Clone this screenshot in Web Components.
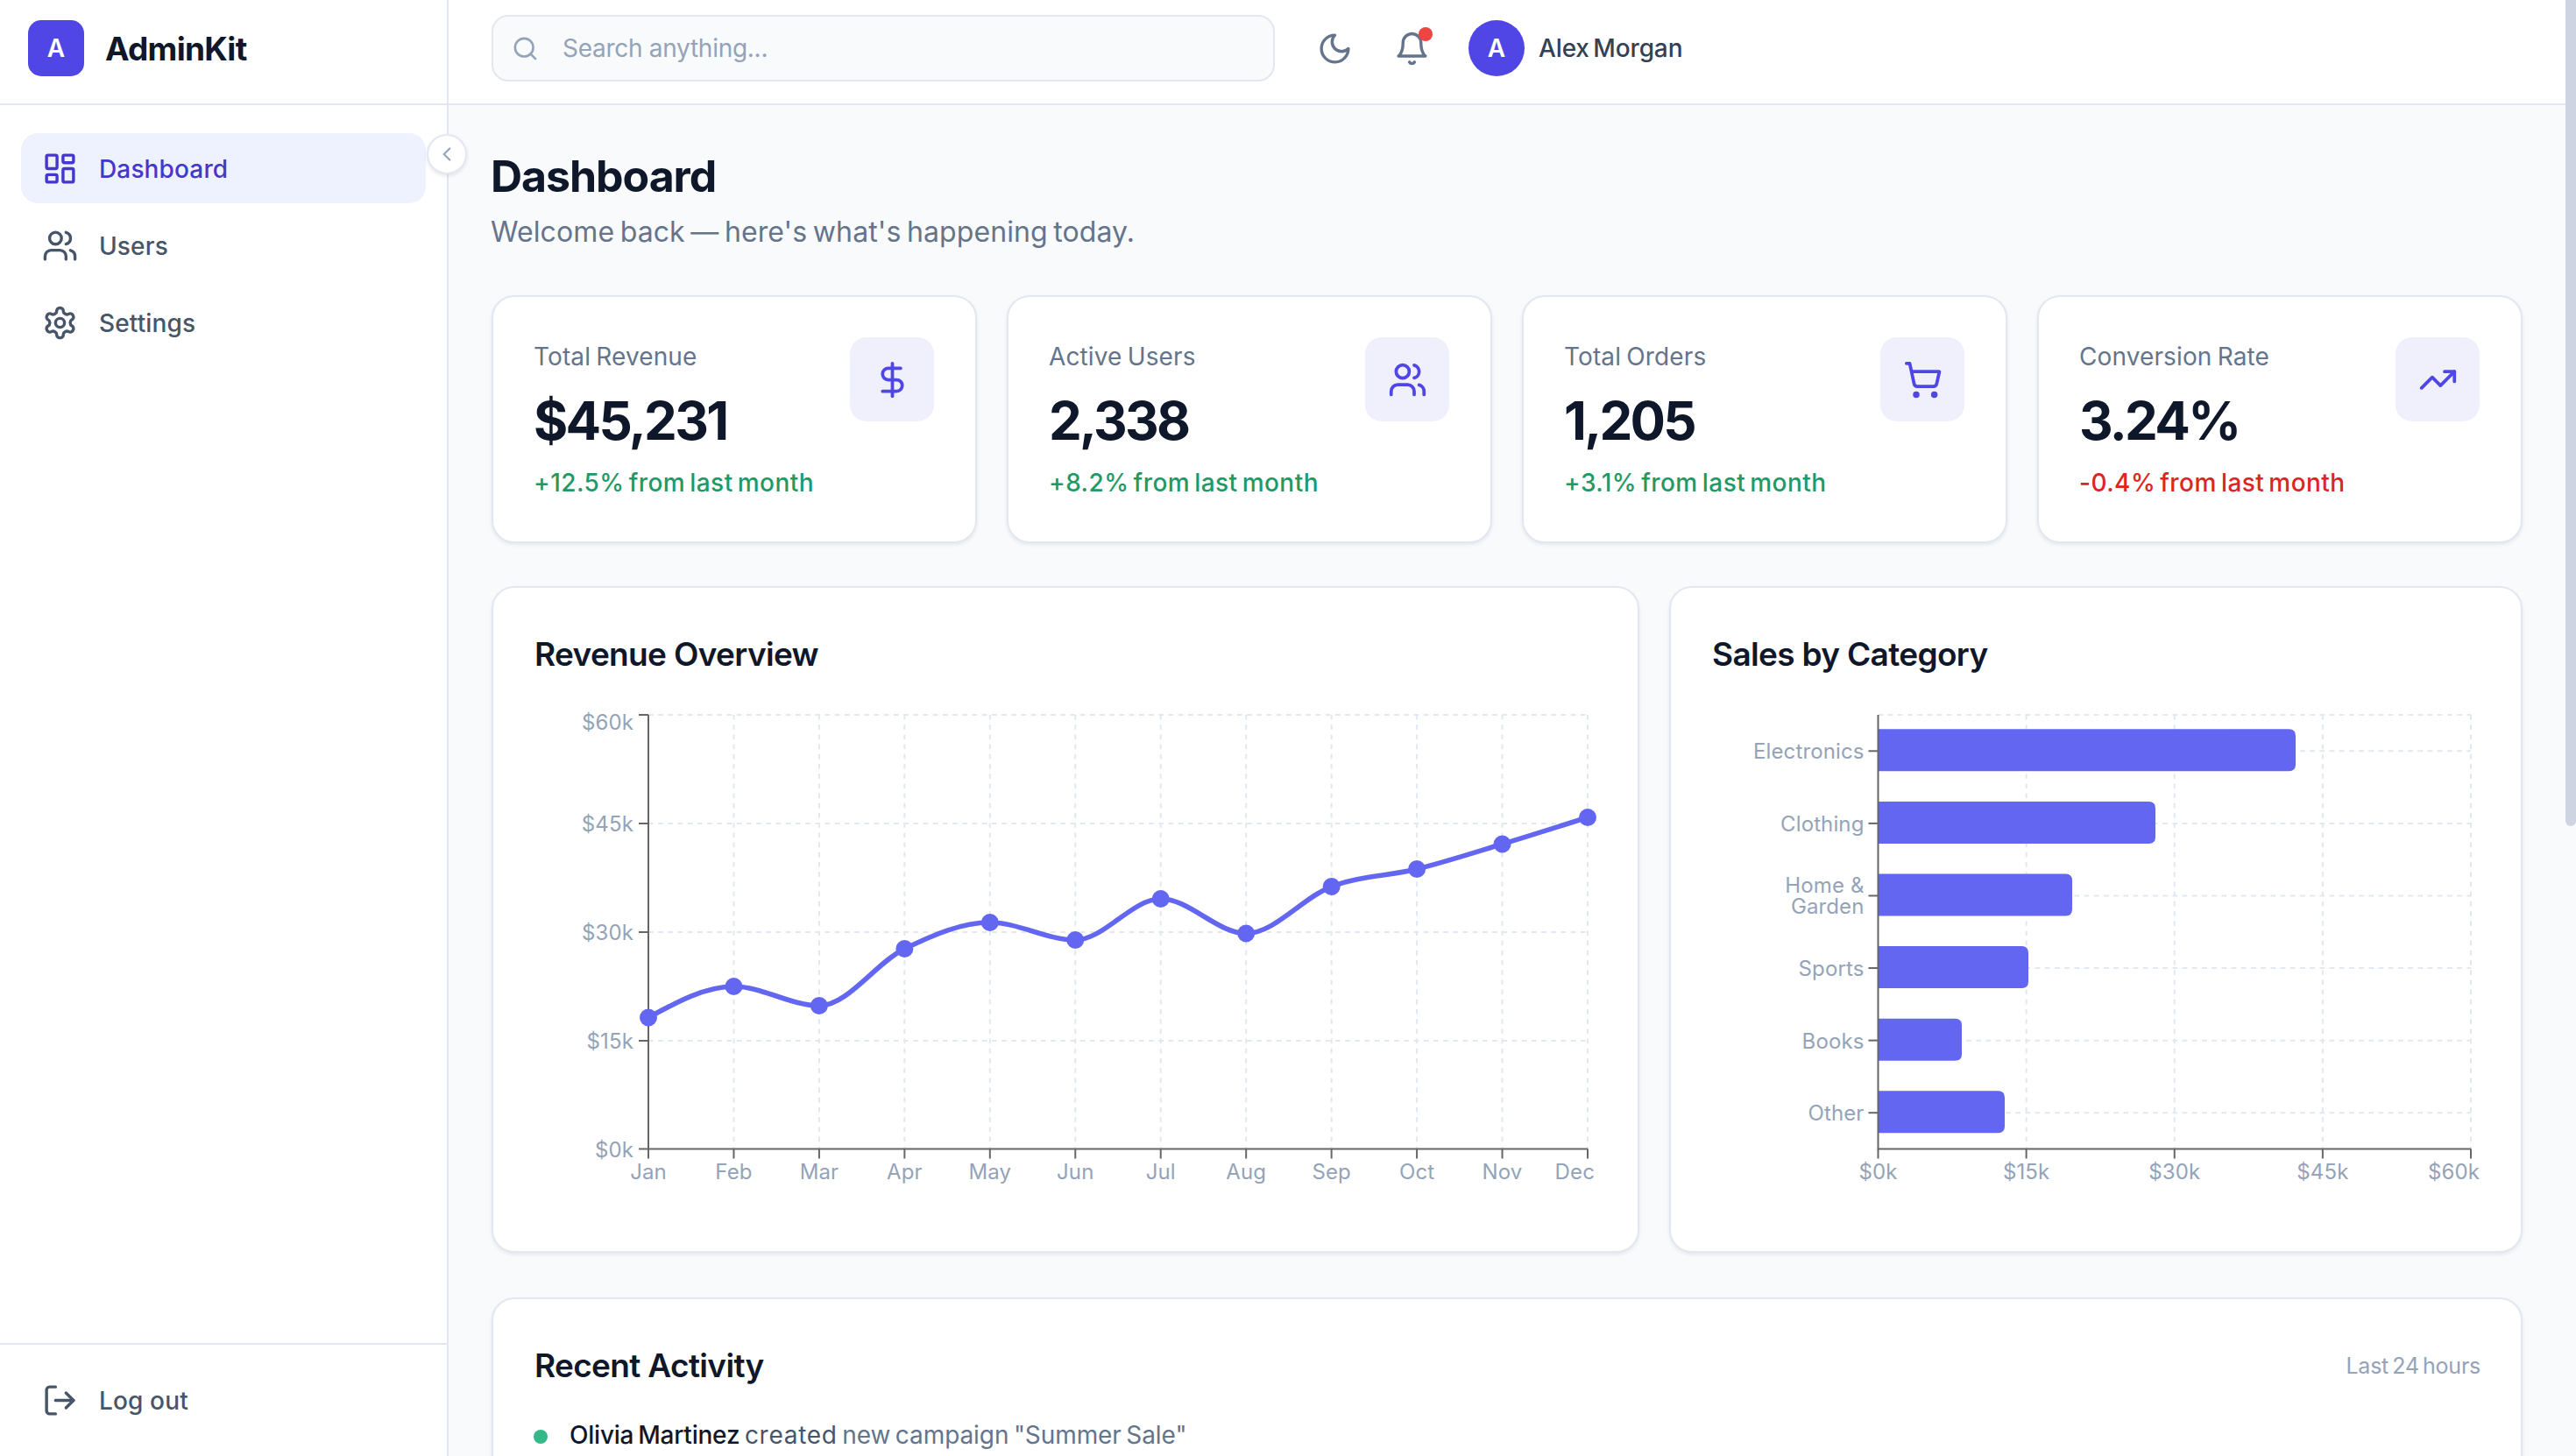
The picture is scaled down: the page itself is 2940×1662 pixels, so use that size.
<!DOCTYPE html>
<html lang="en">
<head>
<meta charset="utf-8">
<title>AdminKit</title>
<style>
  html, body { margin: 0; height: 100%; overflow: hidden; background: #f8fafc; }
  body { font-family: Inter, "Liberation Sans", sans-serif; color: #0f172a; }
</style>
</head>
<body>
<app-shell>
  <side-bar slot="side">
    <nav-item icon="dashboard" active>Dashboard</nav-item>
    <nav-item icon="users">Users</nav-item>
    <nav-item icon="settings">Settings</nav-item>
    <nav-item slot="footer" icon="logout">Log out</nav-item>
  </side-bar>
  <top-bar slot="top"></top-bar>
  <page-head>
    <span slot="title">Dashboard</span>
    <span slot="sub">Welcome back — here's what's happening today.</span>
  </page-head>
  <stat-row>
    <stat-card label="Total Revenue" value="$45,231" change="+12.5% from last month" icon="dollar"></stat-card>
    <stat-card label="Active Users" value="2,338" change="+8.2% from last month" icon="users"></stat-card>
    <stat-card label="Total Orders" value="1,205" change="+3.1% from last month" icon="cart"></stat-card>
    <stat-card label="Conversion Rate" value="3.24%" change="-0.4% from last month" icon="trend" down></stat-card>
  </stat-row>
  <chart-row>
    <chart-card heading="Revenue Overview"><line-chart></line-chart></chart-card>
    <chart-card heading="Sales by Category"><bar-chart></bar-chart></chart-card>
  </chart-row>
  <activity-card heading="Recent Activity" note="Last 24 hours">
    <activity-item who="Olivia Martinez" verb="created">new campaign "Summer Sale"</activity-item>
  </activity-card>
</app-shell>
<page-thumb></page-thumb>

<script>
(function () {

  // lucide shapes, by name
  const ICONS = {
    dashboard: '<rect width="7" height="9" x="3" y="3" rx="1"/><rect width="7" height="5" x="14" y="3" rx="1"/><rect width="7" height="9" x="14" y="12" rx="1"/><rect width="7" height="5" x="3" y="16" rx="1"/>',
    users: '<path d="M16 21v-2a4 4 0 0 0-4-4H6a4 4 0 0 0-4 4v2"/><circle cx="9" cy="7" r="4"/><path d="M22 21v-2a4 4 0 0 0-3-3.87"/><path d="M16 3.13a4 4 0 0 1 0 7.75"/>',
    settings: '<path d="M12.22 2h-.44a2 2 0 0 0-2 2v.18a2 2 0 0 1-1 1.73l-.43.25a2 2 0 0 1-2 0l-.15-.08a2 2 0 0 0-2.73.73l-.22.38a2 2 0 0 0 .73 2.73l.15.1a2 2 0 0 1 1 1.72v.51a2 2 0 0 1-1 1.74l-.15.09a2 2 0 0 0-.73 2.73l.22.38a2 2 0 0 0 2.73.73l.15-.08a2 2 0 0 1 2 0l.43.25a2 2 0 0 1 1 1.73V20a2 2 0 0 0 2 2h.44a2 2 0 0 0 2-2v-.18a2 2 0 0 1 1-1.73l.43-.25a2 2 0 0 1 2 0l.15.08a2 2 0 0 0 2.73-.73l.22-.39a2 2 0 0 0-.73-2.73l-.15-.08a2 2 0 0 1-1-1.74v-.5a2 2 0 0 1 1-1.74l.15-.09a2 2 0 0 0 .73-2.73l-.22-.38a2 2 0 0 0-2.73-.73l-.15.08a2 2 0 0 1-2 0l-.43-.25a2 2 0 0 1-1-1.73V4a2 2 0 0 0-2-2z"/><circle cx="12" cy="12" r="3"/>',
    logout: '<path d="M9 21H5a2 2 0 0 1-2-2V5a2 2 0 0 1 2-2h4"/><polyline points="16 17 21 12 16 7"/><line x1="21" x2="9" y1="12" y2="12"/>',
    search: '<circle cx="11" cy="11" r="8"/><path d="m21 21-4.3-4.3"/>',
    moon: '<path d="M12 3a6 6 0 0 0 9 9 9 9 0 1 1-9-9Z"/>',
    bell: '<path d="M6 8a6 6 0 0 1 12 0c0 7 3 9 3 9H3s3-2 3-9"/><path d="M10.3 21a1.94 1.94 0 0 0 3.4 0"/>',
    dollar: '<line x1="12" x2="12" y1="2" y2="22"/><path d="M17 5H9.5a3.5 3.5 0 0 0 0 7h5a3.5 3.5 0 0 1 0 7H6"/>',
    cart: '<circle cx="8" cy="21" r="1"/><circle cx="19" cy="21" r="1"/><path d="M2.05 2.05h2l2.66 12.42a2 2 0 0 0 2 1.58h9.78a2 2 0 0 0 1.95-1.57l1.65-7.43H5.12"/>',
    trend: '<polyline points="22 7 13.5 15.5 8.5 10.5 2 17"/><polyline points="16 7 22 7 22 13"/>',
    chevron: '<path d="m15 18-6-6 6-6"/>'
  };

  const LINE = '#e3e7f1';

  function makeElement(name, css, html) {
    const template = document.createElement('template');
    template.innerHTML = '<style>' + css + '</style>' + html;
    return template;
  }

  class UiIcon extends HTMLElement {
    static get observedAttributes() {
      return ['name'];
    }
    constructor() {
      super();
      this.attachShadow({ mode: 'open' });
    }
    attributeChangedCallback() {
      const size = this.getAttribute('size') || 41;
      this.shadowRoot.innerHTML = '<style>:host{display:block;flex:none;line-height:0}</style>' +
        '<svg xmlns="http://www.w3.org/2000/svg" width="' + size + '" height="' + size + '" viewBox="0 0 24 24" fill="none" stroke="currentColor" stroke-width="2" stroke-linecap="round" stroke-linejoin="round">' +
        (ICONS[this.getAttribute('name')] || '') + '</svg>';
    }
  }
  customElements.define('ui-icon', UiIcon);

  const shellTemplate = makeElement('app-shell',
    ':host{display:grid;grid-template-columns:512px 1fr;height:1662px;overflow:hidden;padding-right:12px;box-sizing:border-box}' +
    '.col{display:flex;flex-direction:column;min-width:0;height:1662px;overflow:hidden}' +
    '.main{display:flex;flex-direction:column;padding:47px 49px 0}',
    '<slot name="side"></slot><div class="col"><slot name="top"></slot><div class="main"><slot></slot></div></div>');

  class AppShell extends HTMLElement {
    constructor() {
      super();
      this.attachShadow({ mode: 'open' }).appendChild(shellTemplate.content.cloneNode(true));
    }
  }
  customElements.define('app-shell', AppShell);

  const sideTemplate = makeElement('side-bar',
    ':host{display:flex;flex-direction:column;height:1662px;background:#fff;border-right:2px solid ' + LINE + ';box-sizing:border-box;position:relative}' +
    '.brand{display:flex;align-items:center;gap:24px;height:120px;box-sizing:border-box;padding:0 32px 8px;border-bottom:2px solid ' + LINE + '}' +
    '.logo{width:64px;height:64px;border-radius:15px;background:#4f46e5;color:#fff;display:flex;align-items:center;justify-content:center;font-size:28px;font-weight:600}' +
    '.name{font-size:37px;font-weight:700;color:#0f172a;letter-spacing:-.02em}' +
    'nav{display:flex;flex-direction:column;gap:8px;padding:32px 24px;flex:1}' +
    '.foot{height:129px;box-sizing:border-box;border-top:2px solid ' + LINE + ';padding:23px 24px 0}' +
    '.toggle{position:absolute;left:487px;top:153px;width:46px;height:46px;box-sizing:border-box;border-radius:50%;background:#fff;border:2px solid ' + LINE + ';box-shadow:0 2px 4px rgba(15,23,42,.1);display:flex;align-items:center;justify-content:center;color:#94a3b8;z-index:2}',
    '<div class="brand"><div class="logo">A</div><div class="name">AdminKit</div></div>' +
    '<nav><slot></slot></nav><div class="foot"><slot name="footer"></slot></div>' +
    '<div class="toggle"><ui-icon name="chevron" size="26"></ui-icon></div>');

  class SideBar extends HTMLElement {
    constructor() {
      super();
      this.attachShadow({ mode: 'open' }).appendChild(sideTemplate.content.cloneNode(true));
    }
  }
  customElements.define('side-bar', SideBar);

  const navTemplate = makeElement('nav-item',
    ':host{display:flex;align-items:center;gap:24px;height:80px;padding:0 24px;border-radius:19px;font-size:28px;font-weight:500;color:#475569;letter-spacing:.005em}' +
    ':host([active]){background:#eef2ff;color:#4338ca}' +
    'span{margin-top:2px}',
    '<ui-icon></ui-icon><span><slot></slot></span>');

  class NavItem extends HTMLElement {
    constructor() {
      super();
      this.attachShadow({ mode: 'open' }).appendChild(navTemplate.content.cloneNode(true));
    }
    connectedCallback() {
      this.shadowRoot.querySelector('ui-icon').setAttribute('name', this.getAttribute('icon'));
    }
  }
  customElements.define('nav-item', NavItem);

  const topTemplate = makeElement('top-bar',
    ':host{display:flex;align-items:center;height:120px;box-sizing:border-box;padding:0 0 8px 49px;background:#fff;border-bottom:2px solid ' + LINE + ';flex:none}' +
    '.search{display:flex;align-items:center;gap:27px;width:894px;height:76px;box-sizing:border-box;padding:0 21px;background:#f8fafc;border:2px solid ' + LINE + ';border-radius:19px;color:#94a3b8;font-size:28px;letter-spacing:-.01em}' +
    '.btn{position:relative;width:75px;height:75px;display:flex;align-items:center;justify-content:center;color:#64748b}' +
    '.moon{margin-left:31px}.bell{margin-left:13px}' +
    '.dot{position:absolute;left:45px;top:13px;width:16px;height:16px;border-radius:50%;background:#ef4444}' +
    '.avatar{margin-left:27px;width:64px;height:64px;border-radius:50%;background:#4f46e5;color:#fff;display:flex;align-items:center;justify-content:center;font-size:28px;font-weight:600}' +
    '.who{margin-left:16px;font-size:28px;font-weight:500;color:#334155;letter-spacing:-.005em;word-spacing:-.1em}',
    '<div class="search"><ui-icon name="search" size="31"></ui-icon><span>Search anything...</span></div>' +
    '<div class="btn moon"><ui-icon name="moon"></ui-icon></div>' +
    '<div class="btn bell"><ui-icon name="bell"></ui-icon><span class="dot"></span></div>' +
    '<div class="avatar">A</div><div class="who">Alex Morgan</div>');

  class TopBar extends HTMLElement {
    constructor() {
      super();
      this.attachShadow({ mode: 'open' }).appendChild(topTemplate.content.cloneNode(true));
    }
  }
  customElements.define('top-bar', TopBar);

  const headTemplate = makeElement('page-head',
    ':host{display:block;margin-bottom:50px}' +
    '.t{font-size:50px;line-height:68px;font-weight:700;color:#0f172a;letter-spacing:-.021em;margin-bottom:8px;margin-left:-1px}' +
    '.s{font-size:32px;line-height:44px;color:#64748b;letter-spacing:.003em;word-spacing:-.08em;margin-left:-1px}',
    '<div class="t"><slot name="title"></slot></div><div class="s"><slot name="sub"></slot></div>');

  class PageHead extends HTMLElement {
    constructor() {
      super();
      this.attachShadow({ mode: 'open' }).appendChild(headTemplate.content.cloneNode(true));
    }
  }
  customElements.define('page-head', PageHead);

  class StatRow extends HTMLElement {
    constructor() {
      super();
      this.attachShadow({ mode: 'open' }).innerHTML =
        '<style>:host{display:grid;grid-template-columns:repeat(4,1fr);gap:34px;margin-bottom:49px}</style><slot></slot>';
    }
  }
  customElements.define('stat-row', StatRow);

  const CARD_CSS = 'background:#fff;border:2px solid ' + LINE + ';border-radius:26px;box-shadow:0 2px 4px rgba(15,23,42,.08);box-sizing:border-box;padding:46px;';

  const statTemplate = makeElement('stat-card',
    ':host{display:flex;justify-content:space-between;height:283px;' + CARD_CSS + 'padding-right:47px}' +
    '.label{font-size:28px;line-height:44px;color:#64748b;letter-spacing:.004em;word-spacing:-.06em}' +
    '.value{font-size:60px;line-height:72px;font-weight:700;color:#0f172a;letter-spacing:-.045em;margin-top:15px}' +
    '.change{font-size:28px;line-height:44px;font-weight:500;color:#1f9a66;letter-spacing:.016em;word-spacing:-.1em;margin-top:13px}' +
    ':host([down]) .change{color:#dc2626}' +
    '.tile{width:96px;height:96px;border-radius:19px;background:#f0f0fd;color:#4f46e5;display:flex;align-items:center;justify-content:center}',
    '<div><div class="label"></div><div class="value"></div><div class="change"></div></div><div class="tile"><ui-icon size="45"></ui-icon></div>');

  class StatCard extends HTMLElement {
    constructor() {
      super();
      this.attachShadow({ mode: 'open' }).appendChild(statTemplate.content.cloneNode(true));
    }
    connectedCallback() {
      const root = this.shadowRoot;
      root.querySelector('.label').textContent = this.getAttribute('label');
      root.querySelector('.value').textContent = this.getAttribute('value');
      root.querySelector('.change').textContent = this.getAttribute('change');
      root.querySelector('ui-icon').setAttribute('name', this.getAttribute('icon'));
    }
  }
  customElements.define('stat-card', StatCard);

  class ChartRow extends HTMLElement {
    constructor() {
      super();
      this.attachShadow({ mode: 'open' }).innerHTML =
        '<style>:host{display:grid;grid-template-columns:1310fr 974fr;gap:34px;margin-bottom:51px}</style><slot></slot>';
    }
  }
  customElements.define('chart-row', ChartRow);

  const chartCardTemplate = makeElement('chart-card',
    ':host{display:block;height:761px;' + CARD_CSS + '}' +
    'h2{margin:2px 0 26px 1px;font-size:37px;line-height:55px;font-weight:600;color:#0f172a;letter-spacing:-.018em}',
    '<h2></h2><slot></slot>');

  class ChartCard extends HTMLElement {
    constructor() {
      super();
      this.attachShadow({ mode: 'open' }).appendChild(chartCardTemplate.content.cloneNode(true));
    }
    connectedCallback() {
      this.shadowRoot.querySelector('h2').textContent = this.getAttribute('heading');
    }
  }
  customElements.define('chart-card', ChartCard);

  const CHART_CSS = ':host{display:block}svg{display:block;overflow:visible}' +
    'text{font-family:Inter,"Liberation Sans",sans-serif;font-size:24px;fill:#94a3b8;letter-spacing:.005em}' +
    '.grid{stroke:#e2e8f0;stroke-width:2;stroke-dasharray:5.6 5.6;fill:none}' +
    '.axis{stroke:#666;stroke-width:2;fill:none}';

  // same curve as a monotone-x line
  function monotonePath(pts) {
    const n = pts.length;
    const slopes = [];
    for (let i = 0; i < n - 1; i++) slopes.push((pts[i + 1][1] - pts[i][1]) / (pts[i + 1][0] - pts[i][0]));
    const t = new Array(n);
    for (let i = 1; i < n - 1; i++) {
      const h0 = pts[i][0] - pts[i - 1][0], h1 = pts[i + 1][0] - pts[i][0];
      const s0 = slopes[i - 1], s1 = slopes[i];
      const p = (s0 * h1 + s1 * h0) / (h0 + h1);
      t[i] = (Math.sign(s0) + Math.sign(s1)) * Math.min(Math.abs(s0), Math.abs(s1), 0.5 * Math.abs(p)) || 0;
    }
    t[0] = (3 * slopes[0] - t[1]) / 2;
    t[n - 1] = (3 * slopes[n - 2] - t[n - 2]) / 2;
    let d = 'M' + pts[0][0] + ',' + pts[0][1];
    for (let i = 0; i < n - 1; i++) {
      const dx = (pts[i + 1][0] - pts[i][0]) / 3;
      d += 'C' + (pts[i][0] + dx) + ',' + (pts[i][1] + dx * t[i]) + ',' +
        (pts[i + 1][0] - dx) + ',' + (pts[i + 1][1] - dx * t[i + 1]) + ',' + pts[i + 1][0] + ',' + pts[i + 1][1];
    }
    return d;
  }

  class LineChart extends HTMLElement {
    connectedCallback() {
      if (this.shadowRoot) return;
      const months = ['Jan', 'Feb', 'Mar', 'Apr', 'May', 'Jun', 'Jul', 'Aug', 'Sep', 'Oct', 'Nov', 'Dec'];
      const ys = [1161.5, 1126, 1148, 1083, 1053, 1073, 1026, 1065.5, 1012, 992, 963.5, 933];
      const left = 740, right = 1812, top = 816, bottom = 1311.5;
      const step = (right - left) / 11;
      const rows = [[816, '$60k', 824], [940, '$45k', 940], [1064, '$30k', 1064], [1188, '$15k', 1188], [1311.5, '$0k', 1312]];
      const pts = ys.map((y, i) => [left + i * step, y]);
      let s = '';
      rows.forEach(r => { if (r[0] !== bottom) s += `<line class="grid" x1="${left}" x2="${right}" y1="${r[0]}" y2="${r[0]}"/>`; });
      pts.forEach((p, i) => { if (i) s += `<line class="grid" x1="${p[0]}" x2="${p[0]}" y1="${top}" y2="${bottom}"/>`; });
      s += `<path class="axis" d="M${left} ${top}V${bottom}H${right}"/>`;
      rows.forEach(r => {
        s += `<line class="axis" x1="${left - 11}" x2="${left}" y1="${r[0]}" y2="${r[0]}"/>`;
        s += `<text x="723" y="${r[2] + 9}" text-anchor="end">${r[1]}</text>`;
      });
      pts.forEach((p, i) => {
        s += `<line class="axis" x1="${p[0]}" x2="${p[0]}" y1="${bottom}" y2="${bottom + 11}"/>`;
        s += i === 11
          ? `<text x="1820" y="1346" text-anchor="end">${months[i]}</text>`
          : `<text x="${p[0]}" y="1346" text-anchor="middle">${months[i]}</text>`;
      });
      s += `<path d="${monotonePath(pts)}" fill="none" stroke="#6366f1" stroke-width="5.6"/>`;
      pts.forEach(p => { s += `<circle cx="${p[0]}" cy="${p[1]}" r="10" fill="#6366f1"/>`; });
      this.attachShadow({ mode: 'open' }).innerHTML = '<style>' + CHART_CSS + '</style>' +
        `<svg xmlns="http://www.w3.org/2000/svg" width="1214" height="580" viewBox="609 800 1214 580">${s}</svg>`;
    }
  }
  customElements.define('line-chart', LineChart);

  class BarChart extends HTMLElement {
    connectedCallback() {
      if (this.shadowRoot) return;
      const left = 2143.5, right = 2820, top = 816, bottom = 1311.5;
      const bars = [
        [['Electronics'], 2620], [['Clothing'], 2460], [['Home &', 'Garden'], 2365],
        [['Sports'], 2315], [['Books'], 2239], [['Other'], 2288]
      ];
      const band = (bottom - top) / 6;
      const ticks = ['$0k', '$15k', '$30k', '$45k', '$60k'];
      const xStep = (right - left) / 4;
      let s = `<line class="grid" x1="${left}" x2="${right}" y1="${top}" y2="${top}"/>`;
      ticks.forEach((t, i) => { if (i) s += `<line class="grid" x1="${left + i * xStep}" x2="${left + i * xStep}" y1="${top}" y2="${bottom}"/>`; });
      bars.forEach((b, i) => {
        const cy = top + band * (i + 0.5);
        s += `<line class="grid" x1="${left}" x2="${right}" y1="${cy}" y2="${cy}"/>`;
      });
      bars.forEach((b, i) => {
        const cy = top + band * (i + 0.5);
        const r = 7.5, x1 = b[1], y0 = cy - 25, y1 = cy + 23;
        s += `<path d="M${left} ${y0}H${x1 - r}Q${x1} ${y0} ${x1} ${y0 + r}V${y1 - r}Q${x1} ${y1} ${x1 - r} ${y1}H${left}Z" fill="#6366f1"/>`;
        s += `<line class="axis" x1="${left - 11}" x2="${left}" y1="${cy}" y2="${cy}"/>`;
        if (b[0].length === 1) {
          s += `<text x="2127.5" y="${cy + 9}" text-anchor="end">${b[0][0].replace('&', '&amp;')}</text>`;
        } else {
          s += `<text x="2127.5" y="${cy - 3}" text-anchor="end">${b[0][0].replace('&', '&amp;')}</text>`;
          s += `<text x="2127.5" y="${cy + 21}" text-anchor="end">${b[0][1]}</text>`;
        }
      });
      s += `<path class="axis" d="M${left} ${top}V${bottom}H${right}"/>`;
      ticks.forEach((t, i) => {
        const x = left + i * xStep;
        s += `<line class="axis" x1="${x}" x2="${x}" y1="${bottom}" y2="${bottom + 11}"/>`;
        s += i === 4
          ? `<text x="2830" y="1346" text-anchor="end">${t}</text>`
          : `<text x="${x}" y="1346" text-anchor="middle">${t}</text>`;
      });
      this.attachShadow({ mode: 'open' }).innerHTML = '<style>' + CHART_CSS + '</style>' +
        `<svg xmlns="http://www.w3.org/2000/svg" width="878" height="580" viewBox="1953 800 878 580">${s}</svg>`;
    }
  }
  customElements.define('bar-chart', BarChart);

  const activityTemplate = makeElement('activity-card',
    ':host{display:block;min-height:400px;' + CARD_CSS + '}' +
    '.head{display:flex;align-items:center;justify-content:space-between;margin:2px 0 30px 1px}' +
    'h2{margin:0;font-size:37px;line-height:55px;font-weight:600;color:#0f172a;letter-spacing:-.018em}' +
    '.note{font-size:25px;color:#94a3b8;letter-spacing:-.01em;word-spacing:-.1em}',
    '<div class="head"><h2></h2><div class="note"></div></div><slot></slot>');

  class ActivityCard extends HTMLElement {
    constructor() {
      super();
      this.attachShadow({ mode: 'open' }).appendChild(activityTemplate.content.cloneNode(true));
    }
    connectedCallback() {
      this.shadowRoot.querySelector('h2').textContent = this.getAttribute('heading');
      this.shadowRoot.querySelector('.note').textContent = this.getAttribute('note');
    }
  }
  customElements.define('activity-card', ActivityCard);

  const itemTemplate = makeElement('activity-item',
    ':host{display:flex;align-items:center;gap:25px;font-size:28px;line-height:44px;color:#64748b;letter-spacing:-.003em;word-spacing:-.08em}' +
    '.dot{width:16px;height:16px;border-radius:50%;background:#34b888;flex:none;margin-top:4px}' +
    'b{font-weight:500;color:#0f172a;letter-spacing:-.008em}i{font-style:normal;color:#475569;letter-spacing:.026em}',
    '<span class="dot"></span><span><b></b> <i></i> <slot></slot></span>');

  class ActivityItem extends HTMLElement {
    constructor() {
      super();
      this.attachShadow({ mode: 'open' }).appendChild(itemTemplate.content.cloneNode(true));
    }
    connectedCallback() {
      this.shadowRoot.querySelector('b').textContent = this.getAttribute('who');
      this.shadowRoot.querySelector('i').textContent = this.getAttribute('verb');
    }
  }
  customElements.define('activity-item', ActivityItem);

  class PageThumb extends HTMLElement {
    constructor() {
      super();
      // the page's scrollbar thumb, lying over the header edge
      this.attachShadow({ mode: 'open' }).innerHTML =
        '<style>:host{position:fixed;right:0;top:0;width:12px;height:943px;background:#ced4e2;border-radius:0 0 6px 6px}</style>';
    }
  }
  customElements.define('page-thumb', PageThumb);

})();
</script>
</body>
</html>
